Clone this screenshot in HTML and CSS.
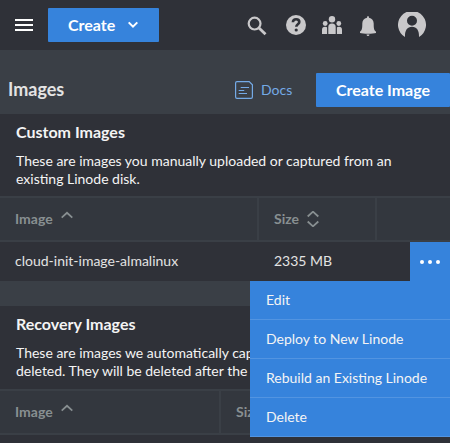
FILE: index.html
```html
<!DOCTYPE html>
<html lang="en">
<head>
<meta charset="utf-8">
<title>Images</title>
<link rel="stylesheet" href="styles.css">
</head>
<body>
<header class="topbar">
  <svg class="menu" width="18" height="12" viewBox="0 0 18 12"><path d="M0 0h18v2H0zM0 5h18v2H0zM0 10h18v2H0z"/></svg>
  <button class="create">Create<svg width="12" height="8" viewBox="0 0 12 8"><path d="M1.7 1.400 6 5.700l4.300-4.300"/></svg></button>
  <nav class="tools">
    <svg class="search" width="20" height="20" viewBox="0 0 20 20"><circle cx="7.600" cy="7.600" r="5.900"/><path d="m12 12 6.500 6.300"/></svg>
    <svg class="help" width="20" height="20" viewBox="0 0 20 20"><circle cx="10" cy="10" r="10"/><path class="mark" d="M6.900 7.300C6.900 5.300 8.200 4.200 10.100 4.200s3.200 1.100 3.200 2.800c0 2.200-3 2.300-3 4.700"/><circle class="dot" cx="10.200" cy="15" r="1.600"/></svg>
    <svg class="people" width="20" height="18" viewBox="0 0 20 18"><circle cx="10" cy="3.200" r="3.200"/><circle cx="3.200" cy="7.500" r="2.400"/><circle cx="16.800" cy="7.500" r="2.400"/><path d="M6.300 18v-7q0-3.600 3.700-3.600t3.700 3.600v7zM0 18v-4q0-3.300 3-3.300 1.800 0 2.100.9V18zM20 18v-4q0-3.300-3-3.300-1.800 0-2.100.9V18z"/></svg>
    <svg class="bell" width="16" height="20" viewBox="0 0 16 20"><path d="M7 1.700q0-1.700 1-1.700t1 1.700c3 .5 4.700 3 4.700 5.800 0 4.500.2 6.700 2.300 8.200v1.400c-3 .9-13 .9-16 0v-1.400c2.100-1.500 2.300-3.700 2.300-8.200C2.300 4.700 4 2.200 7 1.700zM6.500 18.500h3q-.2 1.500-1.500 1.500t-1.500-1.500z"/></svg>
    <svg class="avatar" width="28" height="26" viewBox="0 0 28 26"><path fill-rule="evenodd" d="M7 25A14 14 0 1 1 21 25C21.200 18.700 19 14.800 14 14.800S6.800 18.700 7 25zM14 3.800a5 5 0 1 0 0 10 5 5 0 0 0 0-10z"/></svg>
  </nav>
</header>
<section class="heading">
  <h1>Images</h1>
  <a class="docs"><svg width="18" height="18" viewBox="0 0 18 18"><path d="M2 .6h12.200l3.200 3.200V16q0 1.400-1.400 1.400H2Q.6 17.400.6 16V2Q.6.6 2 .6zM5.700 6.500h8.300M3.700 9.500h5.500M3.700 12.500h8.300"/></svg>Docs</a>
  <button class="create-image">Create Image</button>
</section>
<main>
  <section class="panel">
    <div class="intro">
      <h2>Custom Images</h2>
      <p>These are images you manually uploaded or captured from an<br>existing Linode disk.</p>
    </div>
    <div class="row head">
      <div class="cell">Image<svg width="12" height="16" viewBox="0 0 12 16"><path d="M.7 6.600 6 1.800 11.300 6.600"/></svg></div>
      <div class="cell">Size<svg class="sort" width="12" height="16" viewBox="0 0 12 16"><path d="M.7 5.500 6 .7l5.300 4.800M.7 10.500 6 15.300l5.300-4.800"/></svg></div>
      <div class="cell"></div>
    </div>
    <div class="row item">
      <div class="cell">cloud-init-image-almalinux</div>
      <div class="cell">2335 MB</div>
      <div class="actions">
        <svg width="20" height="4" viewBox="0 0 20 4"><circle cx="2" cy="2" r="2"/><circle cx="10" cy="2" r="2"/><circle cx="18" cy="2" r="2"/></svg>
        <ul class="dropdown"><li>Edit</li><li>Deploy to New Linode</li><li>Rebuild an Existing Linode</li><li>Delete</li></ul>
      </div>
    </div>
  </section>
  <section class="panel recovery">
    <div class="intro">
      <h2>Recovery Images</h2>
      <p>These are images we automatically capture<br>deleted. They will be deleted after the</p>
    </div>
    <div class="row head">
      <div class="cell">Image<svg width="12" height="16" viewBox="0 0 12 16"><path d="M.7 6.600 6 1.800 11.300 6.600"/></svg></div>
      <div class="cell">Size</div>
    </div>
  </section>
</main>
</body>
</html>
```
FILE: styles.css
```css
* { box-sizing: border-box; }
body {
  margin: 0;
  height: 443px;
  overflow: hidden;
  background: #3a3f46;
  color: #fff;
  font: 14px/18px Lato, "Liberation Sans", sans-serif;
}
h1, h2, p, ul { margin: 0; padding: 0; }
svg { flex: none; display: block; }
button {
  border: 0;
  border-radius: 1px;
  background: #3683dc;
  color: #fff;
  font: bold 16px/20px Lato, sans-serif;
  height: 34px;
  padding: 0;
  white-space: nowrap;
}
.topbar {
  display: flex;
  align-items: center;
  height: 50px;
  padding-left: 15px;
  background: #2f3138;
}
.menu { fill: #fff; }
.create {
  display: flex;
  align-items: center;
  width: 111px;
  margin-left: 15px;
  padding-left: 20px;
}
.create svg {
  margin-left: 12px;
  fill: none;
  stroke: #fff;
  stroke-width: 2;
}
.tools { display: flex; align-items: center; margin-left: 88px; fill: #c9c8ca; }
.search { margin-top: 2px; fill: none; stroke: #c9c8ca; stroke-width: 2.2; }
.search path { stroke-width: 2.8; }
.help { margin-left: 19px; }
.help .mark { fill: none; stroke: #2f3138; stroke-width: 2.6; }
.help .dot { fill: #2f3138; }
.people { margin-left: 16px; }
.bell { margin-top: 2px; margin-left: 18px; }
.avatar { margin-left: 22px; }
.heading { display: flex; align-items: center; height: 64px; padding: 15px 0 0 8px; }
h1 { flex: none; width: 227px; padding-bottom: 2px; font-size: 18px; line-height: 22px; color: #e3e3e3; }
.docs { display: flex; align-items: center; width: 81px; gap: 8px; color: #74aae6; }
.docs svg { fill: none; stroke: #74aae6; stroke-width: 1.2; }
.create-image { flex: none; width: 134px; }
.panel { background: #2f3138; }
.intro { height: 82px; padding: 8px 16px 0; color: #f4f4f4; }
h2 { margin-bottom: 10px; font-size: 16px; line-height: 20px; }
.intro p { white-space: nowrap; }
.row { display: grid; grid-template-columns: 257px 118px 1fr; }
.cell { display: flex; align-items: center; padding-left: 15px; white-space: nowrap; }
.head {
  height: 46px;
  border: solid #3a3f46;
  border-width: 2px 0;
  background: #33373e;
  color: #888f91;
  font-weight: bold;
}
.head .cell + .cell { border-left: 2px solid #3a3f46; }
.head svg { margin-left: 8px; fill: none; stroke: #888f91; stroke-width: 1.8; }
.item { height: 39px; color: #e3e3e3; }
.item .cell { padding-bottom: 2px; }
.item .cell + .cell { padding-left: 17px; }
.actions {
  position: relative;
  display: flex;
  align-items: center;
  justify-content: center;
  justify-self: end;
  width: 40px;
  background: #3683dc;
  fill: #fff;
}
.dropdown {
  position: absolute;
  z-index: 1;
  top: 39px;
  right: 0;
  width: 200px;
  background: #3683dc;
  color: #f4f4f4;
  list-style: none;
}
.dropdown li { height: 39px; padding: 10px 16px; border-bottom: 1px solid #5294e1; white-space: nowrap; }
.recovery { height: 137px; margin-top: 25px; }
.recovery .intro { height: 83px; }
.recovery .row { grid-template-columns: 219px 1fr; }
```
